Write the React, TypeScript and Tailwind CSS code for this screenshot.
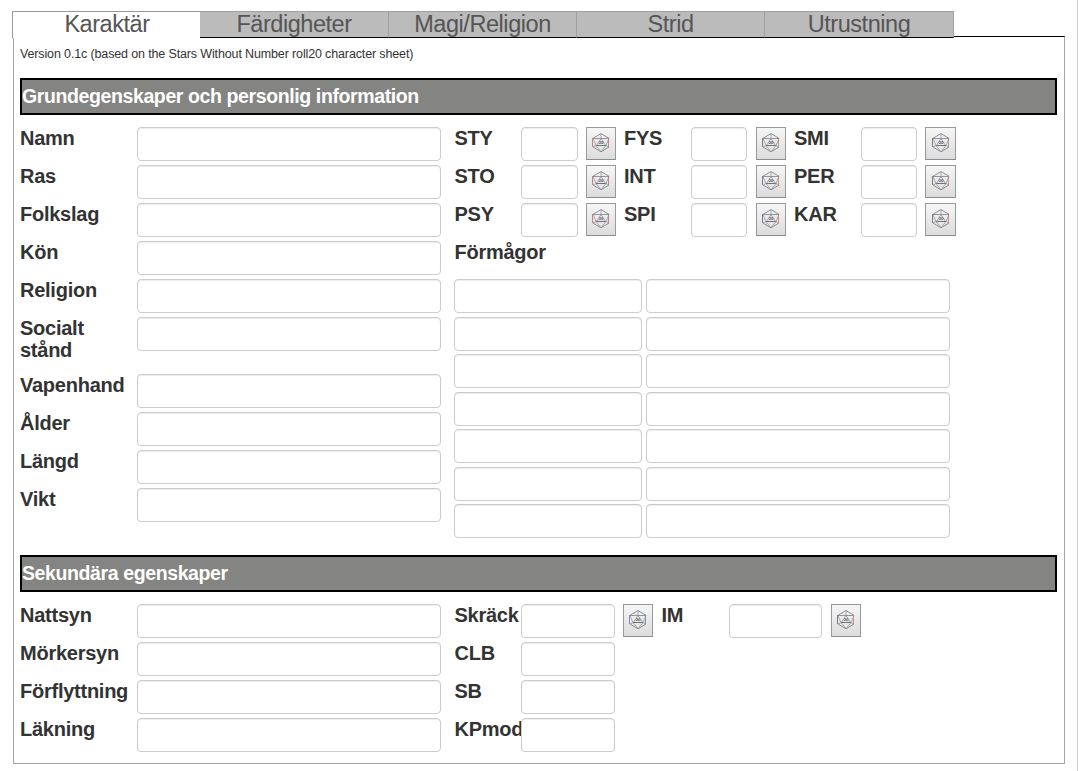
import React from "react";

type DieTone = "red" | "orange" | "violet";

const edgeColors: Record<DieTone, [string, string]> = {
  red: ["#d08078", "#d08078"],
  orange: ["#777b85", "#d89472"],
  violet: ["#8c86c4", "#8488cc"],
};

function Die({ tone }: { tone: DieTone }) {
  const [left, right] = edgeColors[tone];
  return (
    <svg width="18" height="20" viewBox="0 0 18 20" fill="none" strokeWidth="0.8">
      <path d="M1 5.300 9 .6l8 4.700M1 14l8 4.800 8-4.800" stroke="#777" />
      <path d="M.5 5v9" stroke={left} strokeWidth="1" />
      <path d="M16.500 5v9" stroke={right} strokeWidth="1" />
      <path d="M1 5.500h16" stroke="#808080" strokeWidth="0.8" />
      <path d="M4 12.500h10" stroke="#555" strokeWidth="0.8" />
      <path d="M9 .5v5M1 5.500l3 7-3 1.500M17 5.500l-3 7 3 1.500M4 12.500l5 6.300 5-6.300" stroke="#888d9c" strokeWidth="0.7" />
      <path d="M9 5.500 4.500 12.500M9 5.500l4.500 7" stroke="#7b84a0" strokeWidth="0.7" />
      <text x="9" y="11.300" textAnchor="middle" fontSize="4.200" letterSpacing="0" fill="#555" stroke="none" fontFamily="Liberation Sans">20</text>
    </svg>
  );
}

function RollButton({ name, tone, className = "w-[30px] pl-[5px]" }: { name: string; tone: DieTone; className?: string }) {
  return (
    <button
      type="button"
      aria-label={name}
      className={`flex h-[33px] shrink-0 justify-start border border-[#999] border-b-[#8c8c8c] bg-linear-to-b from-[#f6f6f6] to-[#dcdcdc] pt-[5px] ${className}`}
    >
      <Die tone={tone} />
    </button>
  );
}

function Field({ name, className }: { name: string; className: string }) {
  return (
    <input
      type="text"
      aria-label={name}
      className={`block h-[34px] shrink-0 rounded-[4px] border border-[#ccc] bg-white px-2 text-sm shadow-[inset_0_1px_1px_rgba(0,0,0,0.075)] outline-none ${className}`}
    />
  );
}

function Label({ children, className = "" }: { children: React.ReactNode; className?: string }) {
  return <span className={`shrink-0 ${className}`}>{children}</span>;
}

function Row({ label, className = "h-[38px]" }: { label: string; className?: string }) {
  return (
    <div className={`flex ${className}`}>
      <Label className="w-[117px]">{label}</Label>
      <Field name={label} className="w-[304px]" />
    </div>
  );
}

function SectionTitle({ children }: { children: React.ReactNode }) {
  return (
    <h2 className="h-[37px] w-[1037px] border-2 border-black bg-[#848482] text-[19.500px] leading-[32px] font-bold tracking-[-0.39px] text-white">
      {children}
    </h2>
  );
}

const tabs = ["Färdigheter", "Magi/Religion", "Strid", "Utrustning"];
const attributes = [
  ["STY", "FYS", "SMI"],
  ["STO", "INT", "PER"],
  ["PSY", "SPI", "KAR"],
];
const abilityRows = [0, 1, 2, 3, 4, 5, 6];

export default function App() {
  return (
    <div className="h-[771px] w-[1078px] overflow-hidden border-r border-[#ccc] bg-white pt-[11px] pl-3 font-['Liberation_Sans',Arial,sans-serif] text-[#333]">
      <nav className="relative z-10 flex h-[27px] w-[942px] text-center text-[23.500px] leading-[25px] tracking-[-0.45px] text-[#555]">
        <button type="button" className="flex w-[188px] justify-center border-t border-l border-[#999] bg-white pl-px">
          Karaktär
        </button>
        {tabs.map((tab, i) => (
          <button
            key={tab}
            type="button"
            className={`flex shrink-0 justify-center border-t border-b border-t-[#a0a0a0] border-b-black bg-[#bbb] ${
              i === 0 ? "" : "border-l border-l-[#a0a0a0]"
            } ${i === 3 ? "w-[190px] border-r border-r-[#a0a0a0]" : "w-[188px]"}`}
          >
            {tab}
          </button>
        ))}
      </nav>
      <main className="-mt-[2px] ml-px h-[728px] w-[1052px] border border-[#a5a5a5] border-t-black pl-[6px]">
        <p className="h-[41px] pt-[7px] text-[12.500px] leading-[20px] tracking-[-0.137px] whitespace-nowrap">
          Version 0.1c (based on the Stars Without Number roll20 character sheet)
        </p>
        <SectionTitle>Grundegenskaper och personlig information</SectionTitle>
        <div className="flex h-[440px] gap-[13px] pt-3 text-[20px] leading-[22px] font-bold tracking-[-0.25px]">
          <div className="w-[421px]">
            <Row label="Namn" />
            <Row label="Ras" />
            <Row label="Folkslag" />
            <Row label="Kön" />
            <Row label="Religion" />
            <Row label="Socialt stånd" className="h-[57px]" />
            <Row label="Vapenhand" />
            <Row label="Ålder" />
            <Row label="Längd" />
            <Row label="Vikt" />
          </div>
          <div>
            {attributes.map(([a, b, c]) => (
              <div key={a} className="flex h-[38px]">
                <Label className="w-[67px] pl-[0.5px]">{a}</Label>
                <Field name={a} className="mr-2 w-[57px]" />
                <RollButton name={a} tone="red" />
                <Label className="ml-2 w-[67px]">{b}</Label>
                <Field name={b} className="mr-[9px] w-[56px]" />
                <RollButton name={b} tone="orange" />
                <Label className="ml-2 w-[67px]">{c}</Label>
                <Field name={c} className="mr-2 w-[56px]" />
                <RollButton name={c} tone="orange" className="w-[31px] pl-[6px]" />
              </div>
            ))}
            <div className="h-[38px] pl-[0.5px]">Förmågor</div>
            {abilityRows.map((i) => (
              <div key={i} className={`flex gap-1 ${i % 2 === 0 ? "h-[38px]" : "h-[37px]"}`}>
                <Field name="Förmåga" className="w-[188px]" />
                <Field name="Beskrivning" className="w-[304px]" />
              </div>
            ))}
          </div>
        </div>
        <SectionTitle>Sekundära egenskaper</SectionTitle>
        <div className="flex gap-[13px] pt-3 text-[20px] leading-[22px] font-bold tracking-[-0.25px]">
          <div className="w-[421px]">
            <Row label="Nattsyn" />
            <Row label="Mörkersyn" />
            <Row label="Förflyttning" />
            <Row label="Läkning" />
          </div>
          <div>
            <div className="flex h-[38px]">
              <Label className="w-[67px] pl-[0.5px]">Skräck</Label>
              <Field name="Skräck" className="mr-2 w-[94px]" />
              <RollButton name="Skräck" tone="violet" />
              <Label className="ml-2 w-[68px] pl-[0.5px]">IM</Label>
              <Field name="IM" className="mr-[9px] w-[93px]" />
              <RollButton name="IM" tone="orange" />
            </div>
            {["CLB", "SB", "KPmod"].map((name) => (
              <div key={name} className="flex h-[38px]">
                <Label className="w-[67px] pl-[0.5px]">{name}</Label>
                <Field name={name} className="w-[94px]" />
              </div>
            ))}
          </div>
        </div>
      </main>
    </div>
  );
}
